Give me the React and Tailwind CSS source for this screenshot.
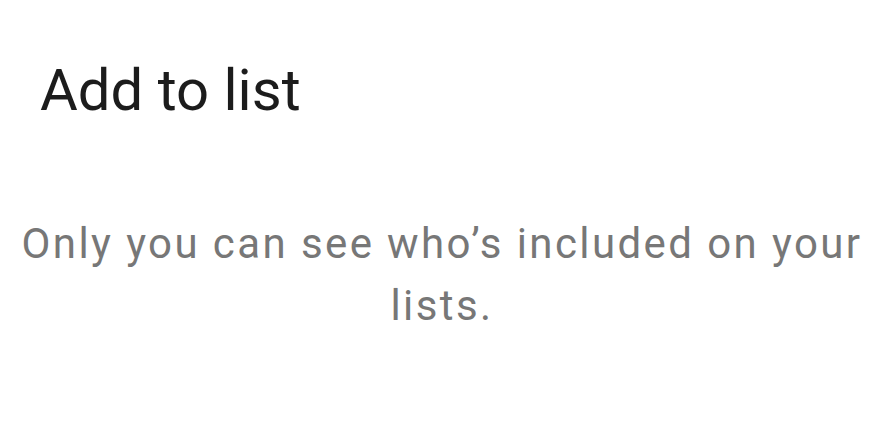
export default function App() {
  return (
    <div className="w-[872px] h-[438px] bg-white font-['Roboto',sans-serif] flex flex-col">
      <h1 className="pl-[40px] pt-[56px] text-[58px] leading-[68px] text-[#1c1c1c]">Add to list</h1>
      <p className="mt-[89px] pl-3 text-center text-[42px] leading-[62px] tracking-[2.4px] text-[#777777]">
        Only you can see who’s included on your lists.
      </p>
    </div>
  )
}
